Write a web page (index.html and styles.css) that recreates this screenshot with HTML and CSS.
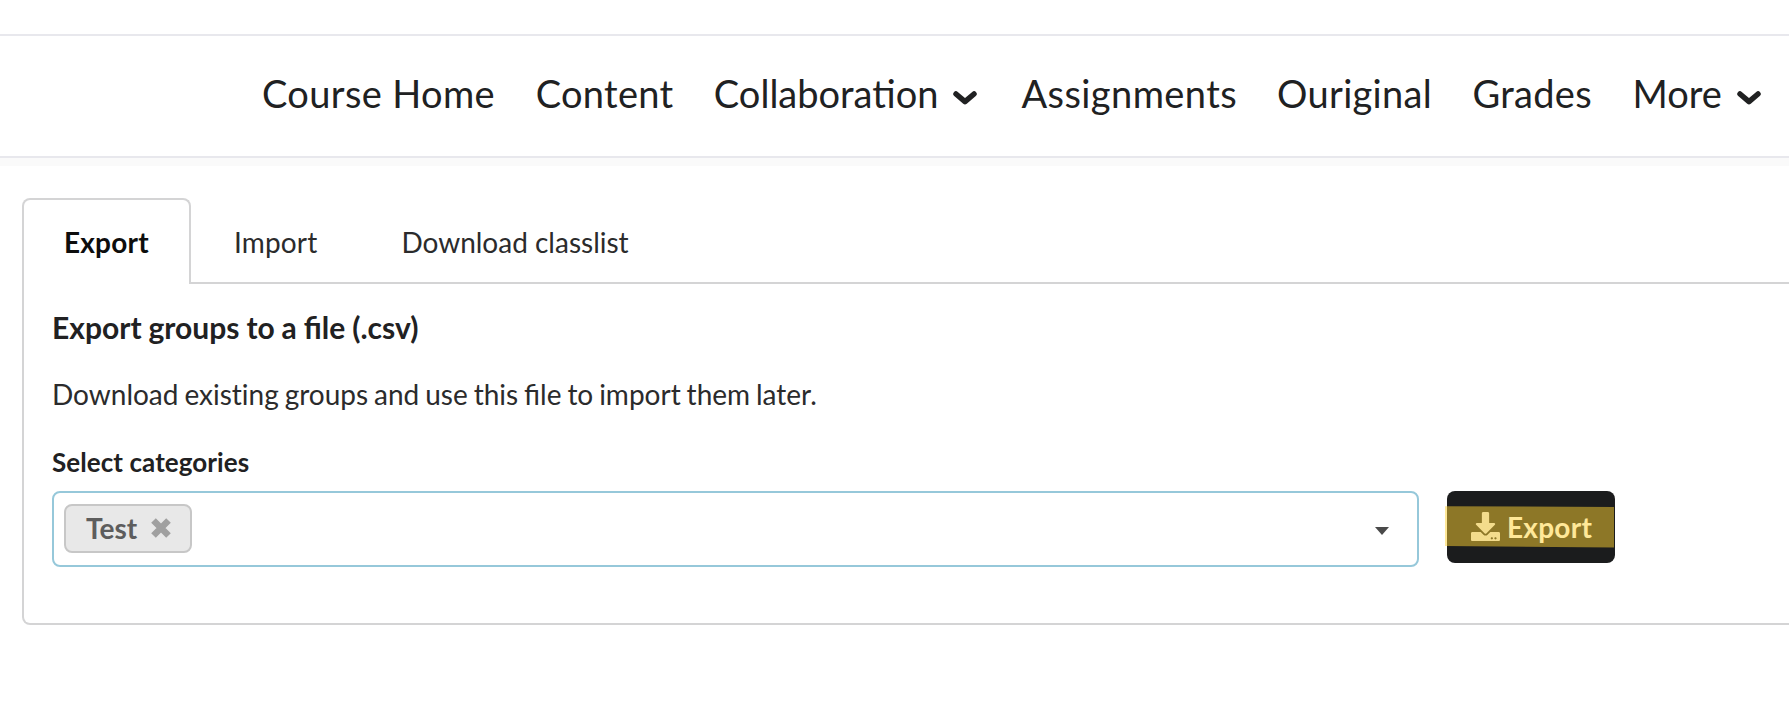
FILE: index.html
```html
<!DOCTYPE html>
<html lang="en">
<head>
<meta charset="utf-8">
<title>Export groups</title>
<link rel="stylesheet" href="styles.css">
</head>
<body>
<header class="nav-wrap">
  <nav class="nav">
    <a class="nav-item home">Course Home</a>
    <a class="nav-item content">Content</a>
    <a class="nav-item collab">Collaboration<svg class="chevron" viewBox="0 0 24 14"><path d="M3 3l9 7.600L21 3"/></svg></a>
    <a class="nav-item assign">Assignments</a>
    <a class="nav-item ouriginal">Ouriginal</a>
    <a class="nav-item grades">Grades</a>
    <a class="nav-item more">More<svg class="chevron" viewBox="0 0 24 14"><path d="M3 3l9 7.600L21 3"/></svg></a>
  </nav>
</header>
<main class="main">
  <div class="tabs">
    <a class="tab active">Export</a>
    <a class="tab import">Import</a>
    <a class="tab">Download classlist</a>
  </div>
  <section class="panel">
    <h1 class="title">Export groups to a file (.csv)</h1>
    <p class="intro">Download <span class="plain">existing</span> groups and use this file to import them later.</p>
    <div class="label">Select categories</div>
    <div class="row">
      <div class="dropdown">
        <span class="chip">Test<svg class="remove" viewBox="0 0 20 20"><path d="M2.500 2.500l15 15M17.500 2.500l-15 15"/></svg></span>
        <svg class="caret" viewBox="0 0 14 8"><path d="M0 0h14L7 8z"/></svg>
      </div>
      <button class="button" type="button">
        <svg class="download" viewBox="0 0 512 512"><path fill-rule="evenodd" d="M216 0h80c13.300 0 24 10.700 24 24v168h87.700c17.800 0 26.700 21.500 14.100 34.100L269.700 378.300c-7.500 7.500-19.800 7.500-27.300 0L90.100 226.100c-12.600-12.600-3.700-34.100 14.100-34.100H192V24c0-13.300 10.700-24 24-24zm296 376v112c0 13.300-10.700 24-24 24H24c-13.300 0-24-10.700-24-24V376c0-13.300 10.700-24 24-24h146.700l49 49c20.100 20.100 52.500 20.100 72.600 0l49-49H488c13.300 0 24 10.700 24 24zm-124 88c0-11-9-20-20-20s-20 9-20 20 9 20 20 20 20-9 20-20zm64 0c0-11-9-20-20-20s-20 9-20 20 9 20 20 20 20-9 20-20z"/></svg>
        <span>Export</span>
        <svg class="marker" viewBox="0 0 170 42"><path d="M0 0.200L169 1V41.500L0 40z"/></svg>
      </button>
    </div>
  </section>
</main>
</body>
</html>
```
FILE: styles.css
```css
* { box-sizing: border-box; }
body {
  margin: 0;
  height: 726px;
  overflow: hidden;
  background: #fff;
  font-family: Lato, sans-serif;
  font-size: 28px;
  color: #212122;
}
.nav-wrap {
  margin-top: 34px;
  height: 132px;
  border-top: 2px solid #e8e8ed;
  border-bottom: 8px solid #fafafa;
}
.nav {
  display: flex;
  align-items: center;
  height: 122px;
  padding: 0 24px 6px 262px;
  border-bottom: 2px solid #e8e8ed;
  font-size: 38px;
  line-height: 56px;
  color: #202122;
}
.nav-item { display: flex; flex-shrink: 0; align-items: center; margin-right: 40px; white-space: nowrap; }
.home { margin-right: 40.800px; letter-spacing: .36px; }
.content { margin-right: 40.500px; letter-spacing: .28px; }
.collab { margin-right: 44px; }
.assign { letter-spacing: .42px; }
.ouriginal { margin-right: 40.500px; letter-spacing: .3px; }
.grades { margin-right: 40.500px; letter-spacing: .3px; }
.more { margin-right: 0; }
.chevron {
  width: 24px;
  height: 14px;
  margin: 9px 0 0 15px;
  fill: none;
  stroke: #202122;
  stroke-width: 5.500;
  stroke-linecap: round;
  stroke-linejoin: round;
}
.main { padding: 32px 0 0 22px; width: 1840px; }
.tabs { display: flex; height: 86px; border-bottom: 2px solid #d4d4d5; }
.tab {
  height: 84px;
  padding: 28px 42px 0;
  line-height: 32px;
  color: #2b2b2c;
}
.tab.active {
  width: 169px;
  height: 86px;
  padding: 26px 0 0 40px;
  border: 2px solid #d4d4d5;
  border-bottom: 0;
  border-radius: 8px 8px 0 0;
  background: #fff;
  font-weight: 700;
  letter-spacing: .2px;
  color: #0d0d0d;
}
.import { padding-left: 43px; letter-spacing: .15px; }
.panel {
  height: 341px;
  padding: 25px 28px;
  border: 2px solid #d4d4d5;
  border-top: 0;
  border-radius: 0 0 8px 8px;
}
.title { margin: 0; font-size: 30px; line-height: 36px; word-spacing: -.35px; }
.intro { margin: 29px 0 0; line-height: 40px; word-spacing: -1.25px; color: #2b2b2c; }
.plain { font-variant-ligatures: none; }
.label { margin-top: 32px; font-size: 26px; font-weight: 700; line-height: 32px; letter-spacing: .07px; }
.row { display: flex; align-items: flex-start; gap: 28px; margin-top: 13px; }
.dropdown {
  display: flex;
  align-items: flex-start;
  justify-content: space-between;
  width: 1367px;
  height: 76px;
  padding: 11px 28px 0 10px;
  border: 2px solid #96c8da;
  border-radius: 8px;
}
.chip {
  display: flex;
  align-items: center;
  width: 128px;
  height: 49px;
  padding: 0 0 1px 20px;
  border: 2px solid #c7c7c7;
  border-radius: 8px;
  background: #e8e8e8;
  font-weight: 700;
  color: #5d5d5d;
}
.remove { width: 20px; height: 20px; margin-left: 14px; overflow: visible; stroke: #a0a0a0; stroke-width: 6.500; }
.caret { width: 14px; height: 8px; margin-top: 23px; fill: #4a4a4a; }
.button {
  position: relative;
  display: flex;
  align-items: center;
  width: 168px;
  height: 72px;
  padding: 0 0 0 24px;
  border: 0;
  border-radius: 8px;
  background: #1b1c1d;
  font: 700 28px Lato, sans-serif;
  letter-spacing: .25px;
  color: #fff;
}
.download { width: 29px; height: 29px; margin: 0 7px 1px 0; fill: #e7e7e7; }
.marker {
  position: absolute;
  left: -2px;
  top: 15px;
  width: 170px;
  height: 42px;
  fill: rgba(255, 210, 50, .5);
}
```
